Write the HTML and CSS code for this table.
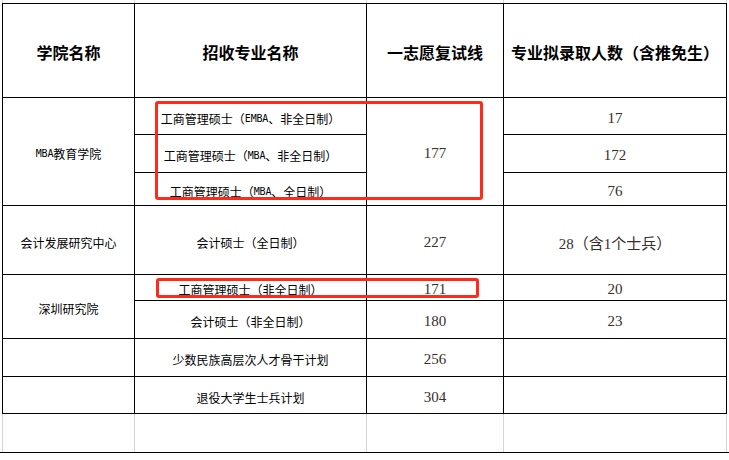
FILE: index.html
```html
<!DOCTYPE html>
<html lang="zh-CN">
<head>
<meta charset="utf-8">
<title>复试线</title>
<link rel="stylesheet" href="styles.css">
</head>
<body>
<div class="sheet">
  <div class="strip strip-top">
    <div class="gc"></div><div class="gc"></div><div class="gc"></div><div class="gc"></div>
  </div>
  <div class="table">
    <div class="c head">学院名称</div>
    <div class="c head">招收专业名称</div>
    <div class="c head">一志愿复试线</div>
    <div class="c head">专业拟录取人数（含推免生）</div>

    <div class="c txt span3"><span class="lat">MBA</span>教育学院</div>
    <div class="c txt">工商管理硕士（<span class="lat">EMBA</span>、非全日制）</div>
    <div class="c num span3">177</div>
    <div class="c num">17</div>

    <div class="c txt">工商管理硕士（<span class="lat">MBA</span>、非全日制）</div>
    <div class="c num">172</div>

    <div class="c txt">工商管理硕士（<span class="lat">MBA</span>、全日制）</div>
    <div class="c num">76</div>

    <div class="c txt">会计发展研究中心</div>
    <div class="c txt">会计硕士（全日制）</div>
    <div class="c num">227</div>
    <div class="c num">28（含1个士兵）</div>

    <div class="c txt span2">深圳研究院</div>
    <div class="c txt">工商管理硕士（非全日制）</div>
    <div class="c num">171</div>
    <div class="c num">20</div>

    <div class="c txt">会计硕士（非全日制）</div>
    <div class="c num">180</div>
    <div class="c num">23</div>

    <div class="c"></div>
    <div class="c txt">少数民族高层次人才骨干计划</div>
    <div class="c num">256</div>
    <div class="c"></div>

    <div class="c"></div>
    <div class="c txt">退役大学生士兵计划</div>
    <div class="c num">304</div>
    <div class="c"></div>
  </div>
  <div class="tail">
    <div class="strip strip-blank">
      <div class="gc"></div><div class="gc"></div><div class="gc"></div><div class="gc"></div>
    </div>
  </div>
  <div class="mark mark-a"></div>
  <div class="mark mark-b"></div>
</div>
</body>
</html>
```

FILE: styles.css
```css
html, body {
  margin: 0;
  padding: 0;
  background: #fff;
}

.sheet {
  position: relative;
  width: 729px;
  height: 460px;
  overflow: hidden;
  font-family: "Noto Sans CJK SC", "Noto Sans", sans-serif;
  color: #000;
}

.strip {
  display: grid;
  grid-template-columns: 131px 231px 136px 222px;
  column-gap: 1px;
  padding: 0 1px;
  margin-left: 2px;
  width: 723px;
  background: #d4d4d4;
}

.strip-top {
  height: 3px;
}

.strip-blank {
  height: 38px;
}

.gc {
  background: #fff;
}

.table {
  display: grid;
  grid-template-columns: 131px 231px 136px 222px;
  grid-template-rows: 93px 36px 37px 32px 68px 25px 37px 37px 36px;
  gap: 1px;
  padding: 1px;
  margin-left: 2px;
  width: 723px;
  background: #000;
}

.c {
  background: #fff;
  display: flex;
  align-items: center;
  justify-content: center;
  white-space: nowrap;
  box-sizing: border-box;
}

.head {
  font-size: 16px;
  font-weight: 700;
  padding-top: 3px;
}

.txt {
  font-size: 12px;
  padding-top: 4px;
}

.lat {
  font-family: "DejaVu Sans Mono", "Liberation Mono", monospace;
  font-size: 10px;
  letter-spacing: -0.2px;
}

.num {
  font-family: "Liberation Serif", "Noto Sans CJK SC", serif;
  font-size: 15px;
  color: #3a2e28;
  padding-top: 4px;
}

.span3 {
  grid-row: span 3;
}

.span2 {
  grid-row: span 2;
}

.tail {
  border-bottom: 1px solid #000;
  width: 729px;
}

.mark {
  position: absolute;
  border: 3px solid #ff2a1a;
  border-radius: 3px;
  box-sizing: border-box;
}

.mark-a {
  left: 155px;
  top: 101px;
  width: 328px;
  height: 99px;
}

.mark-b {
  left: 156px;
  top: 278px;
  width: 323px;
  height: 20px;
}
```
